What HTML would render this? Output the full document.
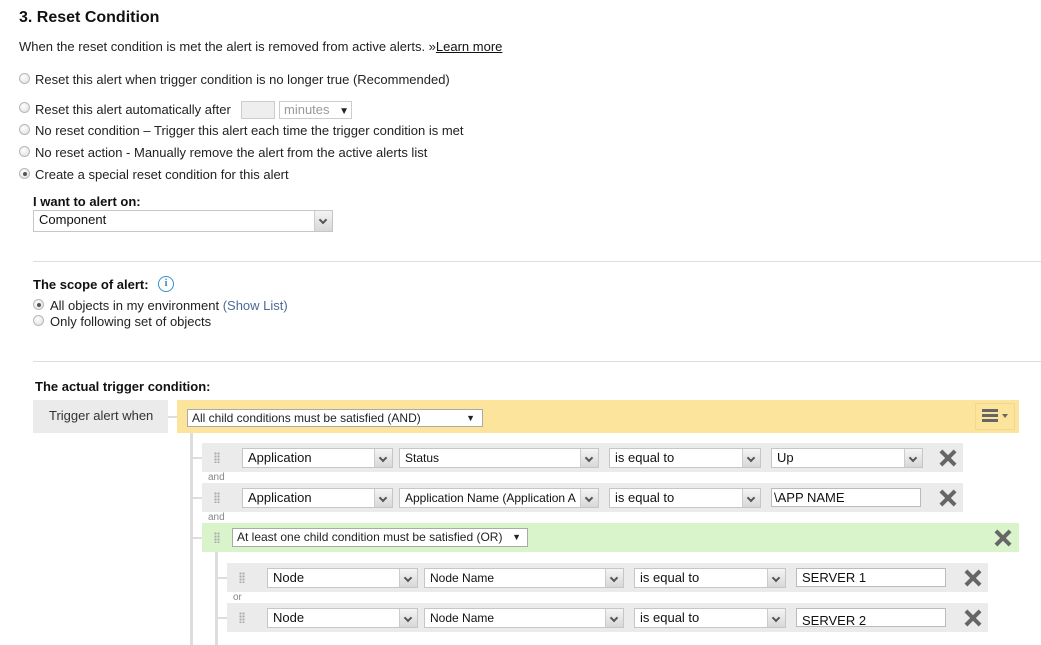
<!DOCTYPE html>
<html><head><meta charset="utf-8"><style>
*{box-sizing:border-box;margin:0;padding:0}
body{width:1041px;height:645px;background:#fff;position:relative;overflow:hidden;font-family:"Liberation Sans",Arial,sans-serif;font-size:13px;color:#222}
.a{position:absolute;white-space:nowrap}
.rd{position:absolute;width:11px;height:11px;border-radius:50%;border:1px solid #b8b8b8;background:radial-gradient(circle at 40% 35%,#fff,#dcdcdc)}
.rd.on::after{content:"";position:absolute;left:2.5px;top:2.5px;width:4px;height:4px;border-radius:50%;background:#555}
.sel{position:absolute;height:20px;background:#fff;border:1px solid #c6c6c6;font-size:13px;line-height:18px;padding-left:5px;overflow:hidden;color:#111}
.sel .b{position:absolute;right:0;top:0;width:18px;height:18px;background:linear-gradient(#f4f4f4,#d8d8d8);border-left:1px solid #ccc}
.sel .b::after{content:"";position:absolute;left:5px;top:6px;width:4px;height:4px;border-right:2px solid #555;border-bottom:2px solid #555;transform:rotate(45deg)}
.inp{position:absolute;height:19px;background:#fff;border:1px solid #bbb;font-size:13px;line-height:18px;padding-left:5px;color:#111}
.row{position:absolute;background:#ebebeb}
.x{position:absolute;width:18px;height:18px}
.x::before,.x::after{content:"";position:absolute;left:7px;top:-1px;width:4px;height:20px;background:#666;transform:rotate(45deg)}
.x::after{transform:rotate(-45deg)}
.dots{position:absolute;width:6px;height:11px;background-image:radial-gradient(circle,#aaa 1px,transparent 1.2px);background-size:3px 3px}
.lbl{position:absolute;font-size:10px;color:#888}
.hl{position:absolute;height:1px;background:#ddd}
</style></head><body>
<div class="a" style="left:19px;top:9px;font-size:16px;font-weight:bold;color:#111">3. Reset Condition</div>
<div class="a" style="left:19px;top:39px">When the reset condition is met the alert is removed from active alerts. »<u style="color:#111">Learn more</u></div>

<div class="rd" style="left:19px;top:73px"></div><div class="a" style="left:35px;top:72px">Reset this alert when trigger condition is no longer true (Recommended)</div>
<div class="rd" style="left:19px;top:102px"></div><div class="a" style="left:35px;top:102px">Reset this alert automatically after</div>
<div style="position:absolute;left:241px;top:101px;width:34px;height:18px;background:#eee;border:1px solid #ccc"></div>
<div style="position:absolute;left:279px;top:101px;width:73px;height:18px;border:1px solid #ccc;background:#fff;color:#999;font-size:13px;line-height:16px;padding-left:4px">minutes <span style="color:#222;font-size:10px;margin-left:6px">▼</span></div>
<div class="rd" style="left:19px;top:124px"></div><div class="a" style="left:35px;top:123px">No reset condition – Trigger this alert each time the trigger condition is met</div>
<div class="rd" style="left:19px;top:146px"></div><div class="a" style="left:35px;top:145px">No reset action - Manually remove the alert from the active alerts list</div>
<div class="rd on" style="left:19px;top:168px"></div><div class="a" style="left:35px;top:167px">Create a special reset condition for this alert</div>

<div class="a" style="left:33px;top:194px;font-weight:bold;color:#111">I want to alert on:</div>
<div class="sel" style="left:33px;top:210px;width:300px;height:22px"><span>Component</span><div class="b" style="height:20px"></div></div>

<div class="hl" style="left:33px;top:261px;width:1008px"></div>
<div class="a" style="left:33px;top:277px;font-weight:bold;color:#111">The scope of alert:</div>
<div style="position:absolute;left:158px;top:276px;width:16px;height:16px;border:1.5px solid #3a8ec8;border-radius:50%;color:#3a8ec8;font-size:11px;font-weight:bold;line-height:13px;text-align:center;font-family:'Liberation Serif',serif">i</div>
<div class="rd on" style="left:33px;top:299px"></div><div class="a" style="left:50px;top:298px">All objects in my environment <span style="color:#4a6a9a">(Show List)</span></div>
<div class="rd" style="left:33px;top:315px"></div><div class="a" style="left:50px;top:314px">Only following set of objects</div>
<div class="hl" style="left:33px;top:361px;width:1008px"></div>

<div class="a" style="left:35px;top:379px;font-weight:bold;color:#111">The actual trigger condition:</div>
<div style="position:absolute;left:33px;top:400px;width:135px;height:33px;background:#ebebeb"></div>
<div class="a" style="left:49px;top:408px;color:#333">Trigger alert when</div>
<div style="position:absolute;left:168px;top:416px;width:9px;height:2px;background:#ddd"></div>
<div style="position:absolute;left:177px;top:400px;width:842px;height:33px;background:#fde49c"></div>
<div class="a" style="left:187px;top:409px;width:296px;height:18px;background:#fff;border:1px solid #aaa;font-size:12px;line-height:16px;padding-left:4px">All child conditions must be satisfied (AND)<span style="position:absolute;right:7px;font-size:9px">▼</span></div>
<div style="position:absolute;left:975px;top:403px;width:40px;height:27px;border:1px solid #f0d890"></div>
<div style="position:absolute;left:982px;top:409px;width:16px;height:3px;background:#666;box-shadow:0 5px 0 #666,0 10px 0 #666"></div>
<div style="position:absolute;left:1002px;top:414px;border:3px solid transparent;border-top:4px solid #666"></div>

<div style="position:absolute;left:190px;top:433px;width:3px;height:212px;background:#ddd"></div>

<!-- row1 -->
<div style="position:absolute;left:193px;top:457px;width:9px;height:2px;background:#ddd"></div>
<div class="row" style="left:202px;top:443px;width:761px;height:29px"></div>
<div class="dots" style="left:214px;top:452px"></div>
<div class="sel" style="left:242px;top:448px;width:151px"><span>Application</span><div class="b"></div></div>
<div class="sel" style="left:399px;top:448px;width:200px"><span style="font-size:12px">Status</span><div class="b"></div></div>
<div class="sel" style="left:609px;top:448px;width:152px"><span>is equal to</span><div class="b"></div></div>
<div class="sel" style="left:771px;top:448px;width:152px"><span>Up</span><div class="b"></div></div>
<div class="x" style="left:939px;top:449px"></div>
<div class="lbl" style="left:208px;top:472px">and</div>

<!-- row2 -->
<div style="position:absolute;left:193px;top:497px;width:9px;height:2px;background:#ddd"></div>
<div class="row" style="left:202px;top:483px;width:761px;height:29px"></div>
<div class="dots" style="left:214px;top:492px"></div>
<div class="sel" style="left:242px;top:488px;width:151px"><span>Application</span><div class="b"></div></div>
<div class="sel" style="left:399px;top:488px;width:200px"><span style="font-size:12px">Application Name (Application A</span><div class="b"></div></div>
<div class="sel" style="left:609px;top:488px;width:152px"><span>is equal to</span><div class="b"></div></div>
<div class="inp" style="left:771px;top:488px;width:150px;padding-left:2px">\APP NAME</div>
<div class="x" style="left:939px;top:489px"></div>
<div class="lbl" style="left:208px;top:512px">and</div>

<!-- green -->
<div style="position:absolute;left:193px;top:537px;width:9px;height:2px;background:#ddd"></div>
<div style="position:absolute;left:202px;top:523px;width:817px;height:29px;background:#d9f4cb"></div>
<div class="dots" style="left:214px;top:532px"></div>
<div class="a" style="left:232px;top:528px;width:296px;height:19px;background:#fff;border:1px solid #aaa;font-size:12px;line-height:17px;padding-left:4px">At least one child condition must be satisfied (OR)<span style="position:absolute;right:6px;font-size:9px">▼</span></div>
<div class="x" style="left:994px;top:529px"></div>
<div style="position:absolute;left:215px;top:552px;width:3px;height:93px;background:#ddd"></div>

<!-- row3 -->
<div style="position:absolute;left:218px;top:577px;width:9px;height:2px;background:#ddd"></div>
<div class="row" style="left:227px;top:563px;width:761px;height:29px"></div>
<div class="dots" style="left:239px;top:572px"></div>
<div class="sel" style="left:267px;top:568px;width:151px"><span>Node</span><div class="b"></div></div>
<div class="sel" style="left:424px;top:568px;width:200px"><span style="font-size:12px">Node Name</span><div class="b"></div></div>
<div class="sel" style="left:634px;top:568px;width:152px"><span>is equal to</span><div class="b"></div></div>
<div class="inp" style="left:796px;top:568px;width:150px">SERVER 1</div>
<div class="x" style="left:964px;top:569px"></div>
<div class="lbl" style="left:233px;top:592px">or</div>

<!-- row4 -->
<div style="position:absolute;left:218px;top:617px;width:9px;height:2px;background:#ddd"></div>
<div class="row" style="left:227px;top:603px;width:761px;height:29px"></div>
<div class="dots" style="left:239px;top:612px"></div>
<div class="sel" style="left:267px;top:608px;width:151px"><span>Node</span><div class="b"></div></div>
<div class="sel" style="left:424px;top:608px;width:200px"><span style="font-size:12px">Node Name</span><div class="b"></div></div>
<div class="sel" style="left:634px;top:608px;width:152px"><span>is equal to</span><div class="b"></div></div>
<div class="inp" style="left:796px;top:608px;width:150px;line-height:24px">SERVER 2</div>
<div class="x" style="left:964px;top:609px"></div>
</body></html>
